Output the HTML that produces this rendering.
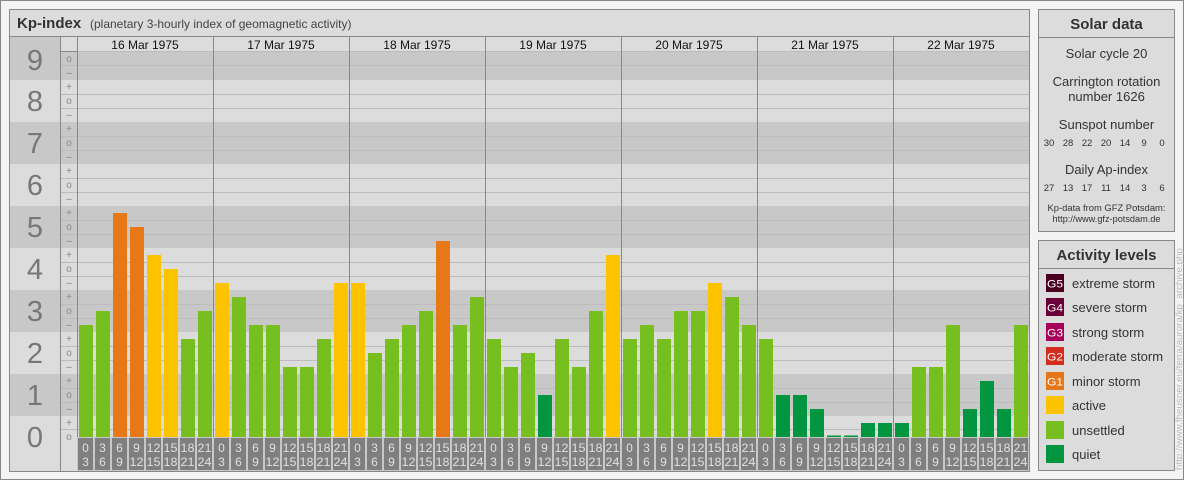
<!DOCTYPE html>
<html><head><meta charset="utf-8"><style>
html,body{margin:0;padding:0;background:#fff;}
svg{display:block;font-family:"Liberation Sans",sans-serif;}
</style></head><body>
<svg width="1184" height="480" viewBox="0 0 1184 480" xmlns="http://www.w3.org/2000/svg">
<rect x="0.5" y="0.5" width="1183" height="479" fill="#f4f4f4" stroke="#888"/>
<!-- main panel -->
<rect x="9.5" y="9.5" width="1020" height="462" fill="#dcdcdc" stroke="#888"/>
<line x1="10" y1="36.5" x2="1029" y2="36.5" stroke="#888"/>
<text x="17" y="28" font-size="15" font-weight="bold" fill="#333">Kp-index</text>
<text x="90" y="28" font-size="12" fill="#444">(planetary 3-hourly index of geomagnetic activity)</text>
<!-- bands -->
<g fill="#c8c8c8">
<rect x="10" y="37" width="50" height="43"/><rect x="77" y="51" width="952" height="29"/><rect x="61" y="51" width="16" height="29"/>
<rect x="10" y="122" width="1019" height="42"/>
<rect x="10" y="206" width="1019" height="42"/>
<rect x="10" y="290" width="1019" height="42"/>
<rect x="10" y="374" width="1019" height="42"/>
<rect x="77" y="437" width="952" height="34"/>
</g>
<g stroke="#bcbcbc" stroke-width="1">
<path d="M61 51.5H1029M61 65.5H1029M61 94.5H1029M61 108.5H1029M61 136.5H1029M61 150.5H1029M61 178.5H1029M61 192.5H1029M61 220.5H1029M61 234.5H1029M61 262.5H1029M61 276.5H1029M61 304.5H1029M61 318.5H1029M61 346.5H1029M61 360.5H1029M61 388.5H1029M61 402.5H1029M61 429.5H1029"/>
</g>
<g stroke="#888"><path d="M60.5 37V471M77.5 37V437M61 51.5H77"/>
<path d="M213.5 37V437M349.5 37V437M485.5 37V437M621.5 37V437M757.5 37V437M893.5 37V437"/></g>
<!-- numbers -->
<g font-size="29" fill="#777" text-anchor="middle">
<text x="35" y="70">9</text><text x="35" y="111">8</text><text x="35" y="153">7</text><text x="35" y="195">6</text><text x="35" y="237">5</text><text x="35" y="279">4</text><text x="35" y="321">3</text><text x="35" y="363">2</text><text x="35" y="405">1</text><text x="35" y="447">0</text>
</g>
<g font-size="10" fill="#888" text-anchor="middle">
<text x="69" y="62">o</text><text x="69" y="76">–</text>
<text x="69" y="90">+</text><text x="69" y="104">o</text><text x="69" y="118">–</text>
<text x="69" y="132">+</text><text x="69" y="146">o</text><text x="69" y="160">–</text>
<text x="69" y="174">+</text><text x="69" y="188">o</text><text x="69" y="202">–</text>
<text x="69" y="216">+</text><text x="69" y="230">o</text><text x="69" y="244">–</text>
<text x="69" y="258">+</text><text x="69" y="272">o</text><text x="69" y="286">–</text>
<text x="69" y="300">+</text><text x="69" y="314">o</text><text x="69" y="328">–</text>
<text x="69" y="342">+</text><text x="69" y="356">o</text><text x="69" y="370">–</text>
<text x="69" y="384">+</text><text x="69" y="398">o</text><text x="69" y="412">–</text>
<text x="69" y="426">+</text><text x="69" y="440">o</text>
</g>
<!-- dates -->
<g font-size="12" fill="#111" text-anchor="middle">
<text x="145" y="49">16 Mar 1975</text><text x="281" y="49">17 Mar 1975</text><text x="417" y="49">18 Mar 1975</text><text x="553" y="49">19 Mar 1975</text><text x="689" y="49">20 Mar 1975</text><text x="825" y="49">21 Mar 1975</text><text x="961" y="49">22 Mar 1975</text>
</g>
<!-- bars -->
<g>
<rect x="79" y="325" width="14" height="112" fill="#77bf1e"/><rect x="96" y="311" width="14" height="126" fill="#77bf1e"/><rect x="113" y="213" width="14" height="224" fill="#e77817"/><rect x="130" y="227" width="14" height="210" fill="#e77817"/><rect x="147" y="255" width="14" height="182" fill="#fcc400"/><rect x="164" y="269" width="14" height="168" fill="#fcc400"/><rect x="181" y="339" width="14" height="98" fill="#77bf1e"/><rect x="198" y="311" width="14" height="126" fill="#77bf1e"/>
<rect x="215" y="283" width="14" height="154" fill="#fcc400"/><rect x="232" y="297" width="14" height="140" fill="#77bf1e"/><rect x="249" y="325" width="14" height="112" fill="#77bf1e"/><rect x="266" y="325" width="14" height="112" fill="#77bf1e"/><rect x="283" y="367" width="14" height="70" fill="#77bf1e"/><rect x="300" y="367" width="14" height="70" fill="#77bf1e"/><rect x="317" y="339" width="14" height="98" fill="#77bf1e"/><rect x="334" y="283" width="14" height="154" fill="#fcc400"/>
<rect x="351" y="283" width="14" height="154" fill="#fcc400"/><rect x="368" y="353" width="14" height="84" fill="#77bf1e"/><rect x="385" y="339" width="14" height="98" fill="#77bf1e"/><rect x="402" y="325" width="14" height="112" fill="#77bf1e"/><rect x="419" y="311" width="14" height="126" fill="#77bf1e"/><rect x="436" y="241" width="14" height="196" fill="#e77817"/><rect x="453" y="325" width="14" height="112" fill="#77bf1e"/><rect x="470" y="297" width="14" height="140" fill="#77bf1e"/>
<rect x="487" y="339" width="14" height="98" fill="#77bf1e"/><rect x="504" y="367" width="14" height="70" fill="#77bf1e"/><rect x="521" y="353" width="14" height="84" fill="#77bf1e"/><rect x="538" y="395" width="14" height="42" fill="#00953e"/><rect x="555" y="339" width="14" height="98" fill="#77bf1e"/><rect x="572" y="367" width="14" height="70" fill="#77bf1e"/><rect x="589" y="311" width="14" height="126" fill="#77bf1e"/><rect x="606" y="255" width="14" height="182" fill="#fcc400"/>
<rect x="623" y="339" width="14" height="98" fill="#77bf1e"/><rect x="640" y="325" width="14" height="112" fill="#77bf1e"/><rect x="657" y="339" width="14" height="98" fill="#77bf1e"/><rect x="674" y="311" width="14" height="126" fill="#77bf1e"/><rect x="691" y="311" width="14" height="126" fill="#77bf1e"/><rect x="708" y="283" width="14" height="154" fill="#fcc400"/><rect x="725" y="297" width="14" height="140" fill="#77bf1e"/><rect x="742" y="325" width="14" height="112" fill="#77bf1e"/>
<rect x="759" y="339" width="14" height="98" fill="#77bf1e"/><rect x="776" y="395" width="14" height="42" fill="#00953e"/><rect x="793" y="395" width="14" height="42" fill="#00953e"/><rect x="810" y="409" width="14" height="28" fill="#00953e"/><rect x="827" y="435.5" width="14" height="1.5" fill="#00953e"/><rect x="844" y="435.5" width="14" height="1.5" fill="#00953e"/><rect x="861" y="423" width="14" height="14" fill="#00953e"/><rect x="878" y="423" width="14" height="14" fill="#00953e"/>
<rect x="895" y="423" width="14" height="14" fill="#00953e"/><rect x="912" y="367" width="14" height="70" fill="#77bf1e"/><rect x="929" y="367" width="14" height="70" fill="#77bf1e"/><rect x="946" y="325" width="14" height="112" fill="#77bf1e"/><rect x="963" y="409" width="14" height="28" fill="#00953e"/><rect x="980" y="381" width="14" height="56" fill="#00953e"/><rect x="997" y="409" width="14" height="28" fill="#00953e"/><rect x="1014" y="325" width="14" height="112" fill="#77bf1e"/>
</g>
<!-- hour labels -->
<g id="lbl0" transform="translate(77,0)">
<g fill="#7f7f7f"><rect x="1" y="438" width="15" height="32"/><rect x="18" y="438" width="15" height="32"/><rect x="35" y="438" width="15" height="32"/><rect x="52" y="438" width="15" height="32"/><rect x="69" y="438" width="15" height="32"/><rect x="86" y="438" width="15" height="32"/><rect x="103" y="438" width="15" height="32"/><rect x="120" y="438" width="15" height="32"/></g>
<g font-size="12" fill="#e0e0e0" text-anchor="middle">
<text x="8.5" y="452">0</text><text x="8.5" y="466">3</text><text x="25.5" y="452">3</text><text x="25.5" y="466">6</text><text x="42.5" y="452">6</text><text x="42.5" y="466">9</text><text x="59.5" y="452">9</text><text x="59.5" y="466" textLength="14" lengthAdjust="spacingAndGlyphs">12</text><text x="76.5" y="452" textLength="14" lengthAdjust="spacingAndGlyphs">12</text><text x="76.5" y="466" textLength="14" lengthAdjust="spacingAndGlyphs">15</text><text x="93.5" y="452" textLength="14" lengthAdjust="spacingAndGlyphs">15</text><text x="93.5" y="466" textLength="14" lengthAdjust="spacingAndGlyphs">18</text><text x="110.5" y="452" textLength="14" lengthAdjust="spacingAndGlyphs">18</text><text x="110.5" y="466" textLength="14" lengthAdjust="spacingAndGlyphs">21</text><text x="127.5" y="452" textLength="14" lengthAdjust="spacingAndGlyphs">21</text><text x="127.5" y="466" textLength="14" lengthAdjust="spacingAndGlyphs">24</text>
</g></g>
<g transform="translate(213,0)">
<g fill="#7f7f7f"><rect x="1" y="438" width="15" height="32"/><rect x="18" y="438" width="15" height="32"/><rect x="35" y="438" width="15" height="32"/><rect x="52" y="438" width="15" height="32"/><rect x="69" y="438" width="15" height="32"/><rect x="86" y="438" width="15" height="32"/><rect x="103" y="438" width="15" height="32"/><rect x="120" y="438" width="15" height="32"/></g>
<g font-size="12" fill="#e0e0e0" text-anchor="middle">
<text x="8.5" y="452">0</text><text x="8.5" y="466">3</text><text x="25.5" y="452">3</text><text x="25.5" y="466">6</text><text x="42.5" y="452">6</text><text x="42.5" y="466">9</text><text x="59.5" y="452">9</text><text x="59.5" y="466" textLength="14" lengthAdjust="spacingAndGlyphs">12</text><text x="76.5" y="452" textLength="14" lengthAdjust="spacingAndGlyphs">12</text><text x="76.5" y="466" textLength="14" lengthAdjust="spacingAndGlyphs">15</text><text x="93.5" y="452" textLength="14" lengthAdjust="spacingAndGlyphs">15</text><text x="93.5" y="466" textLength="14" lengthAdjust="spacingAndGlyphs">18</text><text x="110.5" y="452" textLength="14" lengthAdjust="spacingAndGlyphs">18</text><text x="110.5" y="466" textLength="14" lengthAdjust="spacingAndGlyphs">21</text><text x="127.5" y="452" textLength="14" lengthAdjust="spacingAndGlyphs">21</text><text x="127.5" y="466" textLength="14" lengthAdjust="spacingAndGlyphs">24</text>
</g></g>
<g transform="translate(349,0)">
<g fill="#7f7f7f"><rect x="1" y="438" width="15" height="32"/><rect x="18" y="438" width="15" height="32"/><rect x="35" y="438" width="15" height="32"/><rect x="52" y="438" width="15" height="32"/><rect x="69" y="438" width="15" height="32"/><rect x="86" y="438" width="15" height="32"/><rect x="103" y="438" width="15" height="32"/><rect x="120" y="438" width="15" height="32"/></g>
<g font-size="12" fill="#e0e0e0" text-anchor="middle">
<text x="8.5" y="452">0</text><text x="8.5" y="466">3</text><text x="25.5" y="452">3</text><text x="25.5" y="466">6</text><text x="42.5" y="452">6</text><text x="42.5" y="466">9</text><text x="59.5" y="452">9</text><text x="59.5" y="466" textLength="14" lengthAdjust="spacingAndGlyphs">12</text><text x="76.5" y="452" textLength="14" lengthAdjust="spacingAndGlyphs">12</text><text x="76.5" y="466" textLength="14" lengthAdjust="spacingAndGlyphs">15</text><text x="93.5" y="452" textLength="14" lengthAdjust="spacingAndGlyphs">15</text><text x="93.5" y="466" textLength="14" lengthAdjust="spacingAndGlyphs">18</text><text x="110.5" y="452" textLength="14" lengthAdjust="spacingAndGlyphs">18</text><text x="110.5" y="466" textLength="14" lengthAdjust="spacingAndGlyphs">21</text><text x="127.5" y="452" textLength="14" lengthAdjust="spacingAndGlyphs">21</text><text x="127.5" y="466" textLength="14" lengthAdjust="spacingAndGlyphs">24</text>
</g></g>
<g transform="translate(485,0)">
<g fill="#7f7f7f"><rect x="1" y="438" width="15" height="32"/><rect x="18" y="438" width="15" height="32"/><rect x="35" y="438" width="15" height="32"/><rect x="52" y="438" width="15" height="32"/><rect x="69" y="438" width="15" height="32"/><rect x="86" y="438" width="15" height="32"/><rect x="103" y="438" width="15" height="32"/><rect x="120" y="438" width="15" height="32"/></g>
<g font-size="12" fill="#e0e0e0" text-anchor="middle">
<text x="8.5" y="452">0</text><text x="8.5" y="466">3</text><text x="25.5" y="452">3</text><text x="25.5" y="466">6</text><text x="42.5" y="452">6</text><text x="42.5" y="466">9</text><text x="59.5" y="452">9</text><text x="59.5" y="466" textLength="14" lengthAdjust="spacingAndGlyphs">12</text><text x="76.5" y="452" textLength="14" lengthAdjust="spacingAndGlyphs">12</text><text x="76.5" y="466" textLength="14" lengthAdjust="spacingAndGlyphs">15</text><text x="93.5" y="452" textLength="14" lengthAdjust="spacingAndGlyphs">15</text><text x="93.5" y="466" textLength="14" lengthAdjust="spacingAndGlyphs">18</text><text x="110.5" y="452" textLength="14" lengthAdjust="spacingAndGlyphs">18</text><text x="110.5" y="466" textLength="14" lengthAdjust="spacingAndGlyphs">21</text><text x="127.5" y="452" textLength="14" lengthAdjust="spacingAndGlyphs">21</text><text x="127.5" y="466" textLength="14" lengthAdjust="spacingAndGlyphs">24</text>
</g></g>
<g transform="translate(621,0)">
<g fill="#7f7f7f"><rect x="1" y="438" width="15" height="32"/><rect x="18" y="438" width="15" height="32"/><rect x="35" y="438" width="15" height="32"/><rect x="52" y="438" width="15" height="32"/><rect x="69" y="438" width="15" height="32"/><rect x="86" y="438" width="15" height="32"/><rect x="103" y="438" width="15" height="32"/><rect x="120" y="438" width="15" height="32"/></g>
<g font-size="12" fill="#e0e0e0" text-anchor="middle">
<text x="8.5" y="452">0</text><text x="8.5" y="466">3</text><text x="25.5" y="452">3</text><text x="25.5" y="466">6</text><text x="42.5" y="452">6</text><text x="42.5" y="466">9</text><text x="59.5" y="452">9</text><text x="59.5" y="466" textLength="14" lengthAdjust="spacingAndGlyphs">12</text><text x="76.5" y="452" textLength="14" lengthAdjust="spacingAndGlyphs">12</text><text x="76.5" y="466" textLength="14" lengthAdjust="spacingAndGlyphs">15</text><text x="93.5" y="452" textLength="14" lengthAdjust="spacingAndGlyphs">15</text><text x="93.5" y="466" textLength="14" lengthAdjust="spacingAndGlyphs">18</text><text x="110.5" y="452" textLength="14" lengthAdjust="spacingAndGlyphs">18</text><text x="110.5" y="466" textLength="14" lengthAdjust="spacingAndGlyphs">21</text><text x="127.5" y="452" textLength="14" lengthAdjust="spacingAndGlyphs">21</text><text x="127.5" y="466" textLength="14" lengthAdjust="spacingAndGlyphs">24</text>
</g></g>
<g transform="translate(757,0)">
<g fill="#7f7f7f"><rect x="1" y="438" width="15" height="32"/><rect x="18" y="438" width="15" height="32"/><rect x="35" y="438" width="15" height="32"/><rect x="52" y="438" width="15" height="32"/><rect x="69" y="438" width="15" height="32"/><rect x="86" y="438" width="15" height="32"/><rect x="103" y="438" width="15" height="32"/><rect x="120" y="438" width="15" height="32"/></g>
<g font-size="12" fill="#e0e0e0" text-anchor="middle">
<text x="8.5" y="452">0</text><text x="8.5" y="466">3</text><text x="25.5" y="452">3</text><text x="25.5" y="466">6</text><text x="42.5" y="452">6</text><text x="42.5" y="466">9</text><text x="59.5" y="452">9</text><text x="59.5" y="466" textLength="14" lengthAdjust="spacingAndGlyphs">12</text><text x="76.5" y="452" textLength="14" lengthAdjust="spacingAndGlyphs">12</text><text x="76.5" y="466" textLength="14" lengthAdjust="spacingAndGlyphs">15</text><text x="93.5" y="452" textLength="14" lengthAdjust="spacingAndGlyphs">15</text><text x="93.5" y="466" textLength="14" lengthAdjust="spacingAndGlyphs">18</text><text x="110.5" y="452" textLength="14" lengthAdjust="spacingAndGlyphs">18</text><text x="110.5" y="466" textLength="14" lengthAdjust="spacingAndGlyphs">21</text><text x="127.5" y="452" textLength="14" lengthAdjust="spacingAndGlyphs">21</text><text x="127.5" y="466" textLength="14" lengthAdjust="spacingAndGlyphs">24</text>
</g></g>
<g transform="translate(893,0)">
<g fill="#7f7f7f"><rect x="1" y="438" width="15" height="32"/><rect x="18" y="438" width="15" height="32"/><rect x="35" y="438" width="15" height="32"/><rect x="52" y="438" width="15" height="32"/><rect x="69" y="438" width="15" height="32"/><rect x="86" y="438" width="15" height="32"/><rect x="103" y="438" width="15" height="32"/><rect x="120" y="438" width="15" height="32"/></g>
<g font-size="12" fill="#e0e0e0" text-anchor="middle">
<text x="8.5" y="452">0</text><text x="8.5" y="466">3</text><text x="25.5" y="452">3</text><text x="25.5" y="466">6</text><text x="42.5" y="452">6</text><text x="42.5" y="466">9</text><text x="59.5" y="452">9</text><text x="59.5" y="466" textLength="14" lengthAdjust="spacingAndGlyphs">12</text><text x="76.5" y="452" textLength="14" lengthAdjust="spacingAndGlyphs">12</text><text x="76.5" y="466" textLength="14" lengthAdjust="spacingAndGlyphs">15</text><text x="93.5" y="452" textLength="14" lengthAdjust="spacingAndGlyphs">15</text><text x="93.5" y="466" textLength="14" lengthAdjust="spacingAndGlyphs">18</text><text x="110.5" y="452" textLength="14" lengthAdjust="spacingAndGlyphs">18</text><text x="110.5" y="466" textLength="14" lengthAdjust="spacingAndGlyphs">21</text><text x="127.5" y="452" textLength="14" lengthAdjust="spacingAndGlyphs">21</text><text x="127.5" y="466" textLength="14" lengthAdjust="spacingAndGlyphs">24</text>
</g></g>

<!-- Solar data -->
<rect x="1038.5" y="9.5" width="136" height="222" fill="#dcdcdc" stroke="#888"/>
<line x1="1039" y1="37.5" x2="1174" y2="37.5" stroke="#888"/>
<g text-anchor="middle" fill="#333">
<text x="1106.5" y="29" font-size="15" font-weight="bold">Solar data</text>
<text x="1106.5" y="58" font-size="13">Solar cycle 20</text>
<text x="1106.5" y="86" font-size="13">Carrington rotation</text>
<text x="1106.5" y="101" font-size="13">number 1626</text>
<text x="1106.5" y="129" font-size="13">Sunspot number</text>
<text x="1106.5" y="174" font-size="13">Daily Ap-index</text>
<g font-size="9.5">
<text x="1049" y="146">30</text><text x="1068" y="146">28</text><text x="1087" y="146">22</text><text x="1106" y="146">20</text><text x="1125" y="146">14</text><text x="1144" y="146">9</text><text x="1162" y="146">0</text>
<text x="1049" y="191">27</text><text x="1068" y="191">13</text><text x="1087" y="191">17</text><text x="1106" y="191">11</text><text x="1125" y="191">14</text><text x="1144" y="191">3</text><text x="1162" y="191">6</text>
</g>
<text x="1106.5" y="211" font-size="9" textLength="118" lengthAdjust="spacingAndGlyphs">Kp-data from GFZ Potsdam:</text>
<text x="1106.5" y="222" font-size="9" textLength="108" lengthAdjust="spacingAndGlyphs">http://www.gfz-potsdam.de</text>
</g>
<!-- Activity levels -->
<rect x="1038.5" y="240.5" width="136" height="230" fill="#dcdcdc" stroke="#888"/>
<line x1="1039" y1="268.5" x2="1174" y2="268.5" stroke="#888"/>
<text x="1106.5" y="260" font-size="15" font-weight="bold" fill="#333" text-anchor="middle">Activity levels</text>
<g>
<rect x="1046" y="274" width="18" height="18" fill="#4b0020"/>
<rect x="1046" y="298" width="18" height="18" fill="#6a0038"/>
<rect x="1046" y="323" width="18" height="18" fill="#a6005a"/>
<rect x="1046" y="347" width="18" height="18" fill="#d42d1e"/>
<rect x="1046" y="372" width="18" height="18" fill="#e67616"/>
<rect x="1046" y="396" width="18" height="18" fill="#fcc400"/>
<rect x="1046" y="421" width="18" height="18" fill="#77bf1e"/>
<rect x="1046" y="445" width="18" height="18" fill="#00953e"/>
</g>
<g font-size="11" fill="#fff" text-anchor="middle">
<text x="1055" y="287.5" textLength="16" lengthAdjust="spacingAndGlyphs">G5</text>
<text x="1055" y="311.5" textLength="16" lengthAdjust="spacingAndGlyphs">G4</text>
<text x="1055" y="336.5" textLength="16" lengthAdjust="spacingAndGlyphs">G3</text>
<text x="1055" y="360.5" textLength="16" lengthAdjust="spacingAndGlyphs">G2</text>
<text x="1055" y="385.5" textLength="16" lengthAdjust="spacingAndGlyphs">G1</text>
</g>
<g font-size="13" fill="#333">
<text x="1072" y="288">extreme storm</text>
<text x="1072" y="312">severe storm</text>
<text x="1072" y="337">strong storm</text>
<text x="1072" y="361">moderate storm</text>
<text x="1072" y="386">minor storm</text>
<text x="1072" y="410">active</text>
<text x="1072" y="435">unsettled</text>
<text x="1072" y="459">quiet</text>
</g>
<text transform="translate(1182,470) rotate(-90)" font-size="9" fill="#bbb" textLength="222" lengthAdjust="spacingAndGlyphs">http://www.fheusner.eu/terra/aurora/kp_archive.php</text>
</svg>
</body></html>
